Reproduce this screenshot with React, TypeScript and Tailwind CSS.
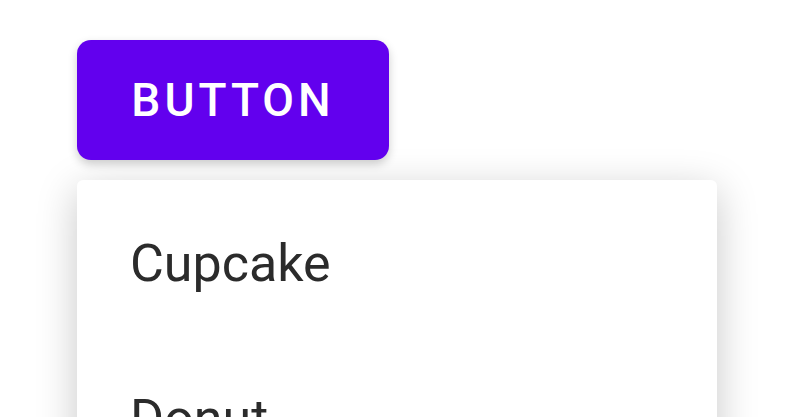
import React from 'react';

const items = ['Cupcake', 'Donut', 'Eclair', 'Froyo'];

export default function App() {
  return (
    <div className="w-[800px] h-[417px] overflow-hidden bg-white font-['Roboto',sans-serif] pl-[77px] pt-[40px]">
      <button className="w-[312px] h-[120px] rounded-[14px] bg-[#6200ee] text-white text-[46px] font-medium tracking-[4px] uppercase shadow-[0_4px_10px_rgba(0,0,0,0.2)]">
        Button
      </button>
      <div className="mt-[20px] w-[640px] bg-white rounded-[6px] shadow-[0_10px_40px_rgba(0,0,0,0.22)] pt-[6px]">
        {items.map(item => (
          <div key={item} className="h-[155px] flex items-center px-[53px] text-[52px] text-[#2b2b2b] leading-none">
            {item}
          </div>
        ))}
      </div>
    </div>
  );
}
